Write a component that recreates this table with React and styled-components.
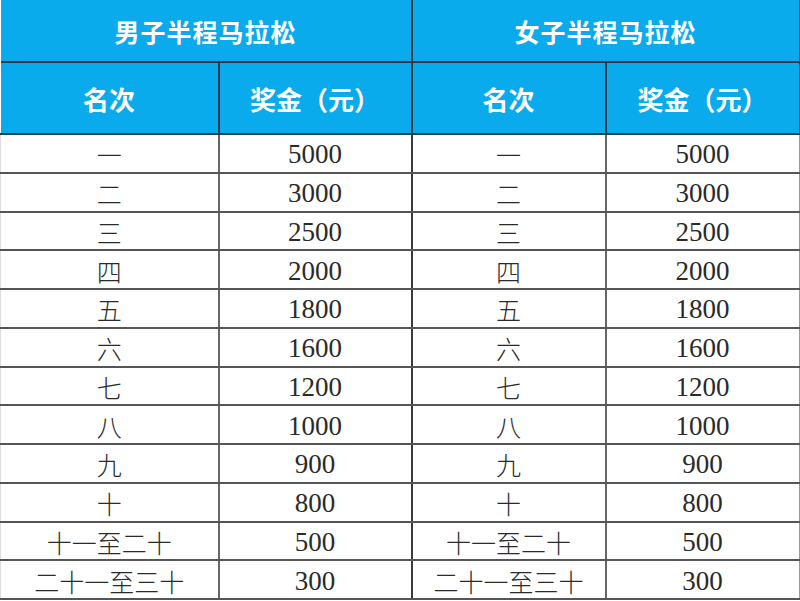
import React from "react";
import styled, { createGlobalStyle } from "styled-components";

const GlobalStyle = createGlobalStyle`
  html, body {
    margin: 0;
    padding: 0;
    background: #fff;
  }
`;

const Table = styled.table`
  border-collapse: collapse;
  table-layout: fixed;
  width: 799px;
  font-family: "Liberation Serif", "Noto Sans CJK SC", serif;
`;

const Title = styled.th`
  height: 61px;
  padding: 0;
  background: #0aabec;
  color: #fff;
  font-family: "Noto Sans CJK SC", sans-serif;
  font-weight: 700;
  font-size: 25px;
  letter-spacing: 1px;
  border-left: 2px solid #2b3a44;
  border-bottom: 2px solid #2b3a44;
  &:first-child {
    border-left: none;
  }
  &:last-child {
    border-right: 2px solid #2b3a44;
  }
`;

const Head = styled.th`
  height: 70px;
  padding: 0;
  background: #0aabec;
  color: #fff;
  font-family: "Noto Sans CJK SC", sans-serif;
  font-weight: 700;
  font-size: 26px;
  border-left: 2px solid #2b3a44;
  border-bottom: 2px solid #2b3a44;
  &:first-child {
    border-left: none;
  }
  &:last-child {
    border-right: 2px solid #2b3a44;
  }
`;

const Cell = styled.td`
  height: 33.75px;
  padding: 3px 0 0;
  text-align: center;
  color: #2a2a2a;
  font-size: ${(p) => (p.$rank ? "25px" : "27px")};
  font-family: ${(p) =>
    p.$rank
      ? '"Noto Sans CJK SC", sans-serif'
      : '"Liberation Serif", serif'};
  font-weight: ${(p) => (p.$rank ? 300 : 400)};
  line-height: 1;
  border-left: 2px solid ${(p) => (p.$mid ? "#3a3a3a" : "#666")};
  border-bottom: 2px solid #555;
  &:first-child {
    border-left: 1px solid #ddd;
  }
  &:last-child {
    border-right: 2px solid #999;
  }
`;

const prizes = [
  ["一", "5000"],
  ["二", "3000"],
  ["三", "2500"],
  ["四", "2000"],
  ["五", "1800"],
  ["六", "1600"],
  ["七", "1200"],
  ["八", "1000"],
  ["九", "900"],
  ["十", "800"],
  ["十一至二十", "500"],
  ["二十一至三十", "300"],
];

export default function App() {
  return (
    <>
      <GlobalStyle />
      <Table>
        <colgroup>
          <col style={{ width: 218 }} />
          <col style={{ width: 193 }} />
          <col style={{ width: 194 }} />
          <col style={{ width: 194 }} />
        </colgroup>
        <thead>
          <tr>
            <Title colSpan={2}>男子半程马拉松</Title>
            <Title colSpan={2}>女子半程马拉松</Title>
          </tr>
          <tr>
            <Head>名次</Head>
            <Head>奖金（元）</Head>
            <Head>名次</Head>
            <Head>奖金（元）</Head>
          </tr>
        </thead>
        <tbody>
          {prizes.map(([rank, amount]) => (
            <tr key={rank}>
              <Cell $rank>{rank}</Cell>
              <Cell>{amount}</Cell>
              <Cell $rank $mid>
                {rank}
              </Cell>
              <Cell>{amount}</Cell>
            </tr>
          ))}
        </tbody>
      </Table>
    </>
  );
}
